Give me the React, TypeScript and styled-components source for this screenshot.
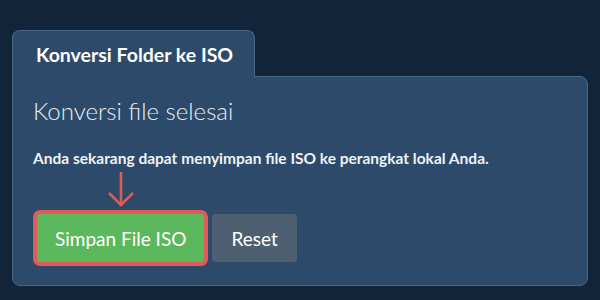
import React from "react";
import styled, { createGlobalStyle } from "styled-components";

const Global = createGlobalStyle`
  html, body { margin: 0; padding: 0; background: #11243a; }
  body { font-family: Lato, "Noto Sans", sans-serif; color: #ffffff; }
`;

const Page = styled.div`
  width: 600px;
  height: 300px;
  box-sizing: border-box;
  padding: 30px 12px 0 12px;
  background: #11243a;
`;

const Tab = styled.div`
  position: relative;
  z-index: 1;
  width: 243px;
  height: 47px;
  box-sizing: border-box;
  margin-bottom: -1px;
  padding: 12px 0 0 23px;
  background: #2d4a6a;
  border: 1px solid #4b6788;
  border-bottom: none;
  border-radius: 8px 8px 0 0;
  font-size: 19.5px;
  font-weight: 700;
  line-height: 23px;
  color: #ffffff;
  white-space: nowrap;
`;

const Panel = styled.div`
  position: relative;
  width: 576px;
  height: 210px;
  box-sizing: border-box;
  padding: 19px 20px 0 20px;
  background: #2d4a6a;
  border: 1px solid #4b6788;
  border-radius: 0 8px 8px 8px;
`;

const Heading = styled.h2`
  margin: 0;
  font-size: 24px;
  font-weight: 300;
  line-height: 29px;
  color: #e8edf2;
`;

const Text = styled.p`
  margin: 24px 0 0 0;
  font-size: 15.5px;
  font-weight: 700;
  line-height: 19px;
  color: #eef2f6;
  white-space: nowrap;
`;

const Actions = styled.div`
  display: flex;
  gap: 8px;
  margin-top: 46px;
  padding-left: 4px;
`;

const Button = styled.button<{ $variant: "primary" | "secondary"; $highlight?: boolean }>`
  position: relative;
  height: 48px;
  padding: 0 ${(p) => (p.$variant === "primary" ? "18px" : "19px")};
  border: none;
  border-radius: 3px;
  font-family: Lato, "Noto Sans", sans-serif;
  font-size: 19px;
  font-weight: 400;
  color: #ffffff;
  background: ${(p) => (p.$variant === "primary" ? "#5cb85c" : "#4e5f71")};
  box-shadow: ${(p) => (p.$highlight ? "0 0 0 4px #e05a59" : "none")};
  cursor: pointer;
`;

const Pointer = styled.svg`
  position: absolute;
  left: 50%;
  top: -42px;
  width: 30px;
  height: 36px;
  transform: translateX(-50%);
  overflow: visible;
`;

export default function App() {
  return (
    <>
      <Global />
      <Page>
        <Tab>Konversi Folder ke ISO</Tab>
        <Panel>
          <Heading>Konversi file selesai</Heading>
          <Text>Anda sekarang dapat menyimpan file ISO ke perangkat lokal Anda.</Text>
          <Actions>
            <Button $variant="primary" $highlight>
              <Pointer viewBox="0 0 30 36" fill="none" stroke="#e05a59" strokeWidth="2.6" strokeLinecap="butt">
                <line x1="15" y1="0" x2="15" y2="34" />
                <polyline points="3,21 15,33 27,21" strokeLinejoin="miter" />
              </Pointer>
              Simpan File ISO
            </Button>
            <Button $variant="secondary">Reset</Button>
          </Actions>
        </Panel>
      </Page>
    </>
  );
}
